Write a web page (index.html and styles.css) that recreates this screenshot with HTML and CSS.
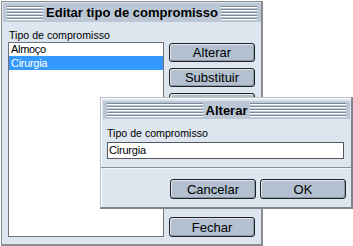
FILE: index.html
```html
<!DOCTYPE html>
<html>
<head>
<meta charset="utf-8">
<link rel="stylesheet" href="styles.css">
</head>
<body>
<div class="win">
  <div class="titlebar">
    <span class="stripes"></span>
    <span class="title">Editar tipo de compromisso</span>
    <span class="stripes"></span>
  </div>
  <div class="win-body">
    <div class="label">Tipo de compromisso</div>
    <div class="cols">
      <div class="list">
        <div class="item">Almoço</div>
        <div class="item selected">Cirurgia</div>
      </div>
      <div class="buttons">
        <button class="btn">Alterar</button>
        <button class="btn">Substituir</button>
        <button class="btn" aria-label="Remover"></button>
        <button class="btn btn-bottom">Fechar</button>
      </div>
    </div>
  </div>
</div>

<div class="dialog">
  <div class="titlebar dlg-title">
    <span class="stripes"></span>
    <span class="title">Alterar</span>
    <span class="stripes"></span>
  </div>
  <div class="dlg-body">
    <div class="label">Tipo de compromisso</div>
    <div class="input">Cirurgia</div>
  </div>
  <div class="dlg-footer">
    <button class="btn">Cancelar</button>
    <button class="btn">OK</button>
  </div>
</div>
</body>
</html>
```
FILE: styles.css
```css
html, body {
  margin: 0;
  padding: 0;
  background: #ffffff;
  font-family: "Liberation Sans", Arial, sans-serif;
  color: #000;
}

body {
  width: 353px;
  height: 246px;
  position: relative;
  overflow: hidden;
}

.win {
  box-sizing: border-box;
  margin: 1px 0 0 1px;
  width: 262px;
  height: 245px;
  background: #dde5ef;
  border-style: solid;
  border-color: #8a8d92;
  border-width: 1px 2px 2px 1px;
  display: flex;
  flex-direction: column;
}

.titlebar {
  display: flex;
  align-items: center;
  height: 19px;
  margin: 1px 0 0 1px;
  background: #bcc7d5;
  padding: 0 4px;
}

.stripes {
  flex: 1;
  height: 14px;
  background: repeating-linear-gradient(to bottom,
    #7e8898 0, #7e8898 1px,
    #ffffff 1px, #ffffff 2px,
    transparent 2px, transparent 3px);
}

.title {
  font-weight: bold;
  font-size: 13px;
  line-height: 15px;
  padding: 0 3px;
  white-space: nowrap;
}

.win-body {
  flex: 1;
  display: flex;
  flex-direction: column;
  padding: 7px 6px 7px 6px;
}

.label {
  font-size: 10.6px;
  line-height: 13px;
  padding-left: 1px;
  white-space: nowrap;
}

.cols {
  flex: 1;
  display: flex;
  gap: 5px;
}

.list {
  box-sizing: border-box;
  width: 156px;
  background: #ffffff;
  border: 1px solid #6e7177;
}

.item {
  font-size: 11px;
  line-height: 13px;
  height: 13px;
  padding-left: 2px;
  letter-spacing: -0.3px;
  white-space: nowrap;
}

.item.selected {
  background: #3399ff;
  color: #ffffff;
  height: 14px;
  line-height: 14px;
}

.buttons {
  display: flex;
  flex-direction: column;
  gap: 6px;
  padding-top: 1px;
  width: 86px;
}

.btn {
  box-sizing: border-box;
  height: 19px;
  width: 86px;
  padding: 0;
  margin: 0;
  font-family: "Liberation Sans", Arial, sans-serif;
  font-size: 13px;
  line-height: 17px;
  color: #000;
  background: #b2c0d0;
  border: 1px solid #1f2226;
  border-radius: 3px;
  box-shadow: inset 1px 1px 0 #dfe6ee, inset -1px -1px 0 #8b98a8;
}

.btn-bottom {
  margin-top: auto;
  height: 20px;
}

.dialog {
  position: absolute;
  left: 100px;
  top: 97px;
  box-sizing: border-box;
  width: 253px;
  height: 112px;
  background: #dde5ef;
  border-style: solid;
  border-color: #b9bcc1 #808389 #808389 #b9bcc1;
  border-width: 1px 2px 2px 1px;
  box-shadow: inset 1px 1px 0 #ffffff;
  display: flex;
  flex-direction: column;
}

.dlg-title {
  margin: 3px 1px 0 2px;
  height: 18px;
}

.dlg-body {
  padding: 8px 5px 0 6px;
}

.dlg-body .label {
  padding-left: 0;
}

.input {
  box-sizing: border-box;
  margin-top: 2px;
  width: 237px;
  height: 17px;
  background: #ffffff;
  border: 1px solid #55585d;
  font-size: 11px;
  line-height: 15px;
  padding-left: 1px;
  letter-spacing: -0.2px;
}

.dlg-footer {
  margin-top: 8px;
  border-top: 1px solid #8c9096;
  box-shadow: inset 0 1px 0 #f4f7fa;
  display: flex;
  justify-content: flex-end;
  gap: 4px;
  padding: 11px 5px 0 0;
}

.dlg-footer .btn {
  width: 86px;
  height: 20px;
}
```
